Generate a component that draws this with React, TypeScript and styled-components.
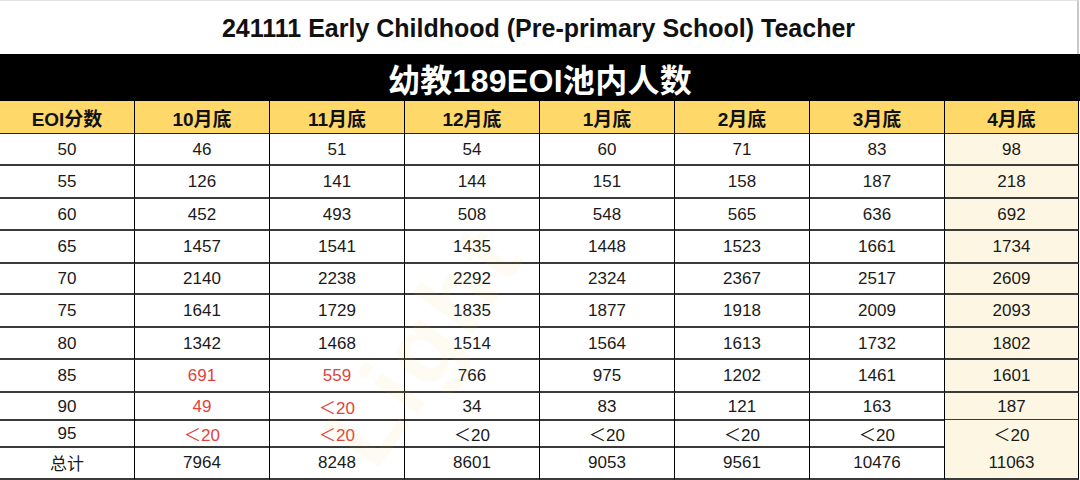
import React from "react";
import styled, { createGlobalStyle } from "styled-components";

const Global = createGlobalStyle`
  html, body { margin: 0; padding: 0; background: #ffffff; }
  body { font-family: "Liberation Sans", Arial, "Noto Sans CJK SC", sans-serif; }
`;

const Page = styled.div`
  position: relative;
  width: 1080px;
  height: 480px;
  overflow: hidden;
  background: #ffffff;
  display: flex;
  flex-direction: column;
`;

const TitleBar = styled.div`
  height: 54px;
  border-top: 1px solid #e2e2e2;
  border-right: 2px solid #c8c8c8;
  margin-right: 1px;
  display: flex;
  align-items: center;
  justify-content: center;
  font-size: 25px;
  font-weight: 700;
  color: #111;
  padding-top: 2px;
  box-sizing: border-box;
`;

const Banner = styled.div`
  height: 47px;
  background: #000;
  color: #fff;
  display: flex;
  align-items: center;
  justify-content: center;
  font-size: 32px;
  font-weight: 700;
  letter-spacing: 0.3px;
`;

const GridRow = styled.div<{ $h: number; $head?: boolean }>`
  display: grid;
  grid-template-columns: repeat(7, 135px) 134px;
  height: ${(p) => p.$h}px;
  width: 1079px;
  background: ${(p) => (p.$head ? "#fed96a" : "transparent")};
`;

const HeadCell = styled.div`
  display: flex;
  align-items: center;
  justify-content: center;
  font-size: 19px;
  font-weight: 700;
  color: #111;
  border-right: 1px solid #000;
  border-bottom: 1px solid #222;
`;

const Cell = styled.div<{ $red?: boolean; $last?: boolean }>`
  display: flex;
  align-items: center;
  justify-content: center;
  font-size: 17px;
  color: ${(p) => (p.$red ? "#e0443c" : "#1a1a1a")};
  background: ${(p) => (p.$last ? "#fdf6e2" : "transparent")};
  border-right: 1px solid #000;
  border-bottom: 2px solid #3a3a3a;
  padding-top: 1px;
`;

const Watermark = styled.div<{ $x: number; $y: number; $size: number; $deg: number }>`
  position: absolute;
  left: ${(p) => p.$x}px;
  top: ${(p) => p.$y}px;
  font-weight: 700;
  font-size: ${(p) => p.$size}px;
  color: rgba(240, 200, 90, 0.07);
  transform: rotate(${(p) => p.$deg}deg);
  transform-origin: left top;
  white-space: nowrap;
  pointer-events: none;
  letter-spacing: 4px;
`;

const headers = ["EOI分数", "10月底", "11月底", "12月底", "1月底", "2月底", "3月底", "4月底"];

type RowData = { label: string; vals: string[]; red?: number[]; h: number };

const rows: RowData[] = [
  { label: "50", vals: ["46", "51", "54", "60", "71", "83", "98"], h: 32 },
  { label: "55", vals: ["126", "141", "144", "151", "158", "187", "218"], h: 33 },
  { label: "60", vals: ["452", "493", "508", "548", "565", "636", "692"], h: 32 },
  { label: "65", vals: ["1457", "1541", "1435", "1448", "1523", "1661", "1734"], h: 33 },
  { label: "70", vals: ["2140", "2238", "2292", "2324", "2367", "2517", "2609"], h: 31 },
  { label: "75", vals: ["1641", "1729", "1835", "1877", "1918", "2009", "2093"], h: 33 },
  { label: "80", vals: ["1342", "1468", "1514", "1564", "1613", "1732", "1802"], h: 32 },
  { label: "85", vals: ["691", "559", "766", "975", "1202", "1461", "1601"], red: [0, 1], h: 33 },
  { label: "90", vals: ["49", "＜20", "34", "83", "121", "163", "187"], red: [0, 1], h: 27 },
  { label: "95", vals: ["＜20", "＜20", "＜20", "＜20", "＜20", "＜20", "＜20"], red: [0, 1], h: 26 },
  { label: "总计", vals: ["7964", "8248", "8601", "9053", "9561", "10476", "11063"], h: 34 },
];

export default function App() {
  return (
    <Page>
      <Global />
      <TitleBar>241111 Early Childhood (Pre-primary School) Teacher</TitleBar>
      <Banner>幼教189EOI池内人数</Banner>
      <GridRow $h={33} $head>
        {headers.map((h) => (
          <HeadCell key={h}>{h}</HeadCell>
        ))}
      </GridRow>
      {rows.map((r) => (
        <GridRow key={r.label} $h={r.h}>
          <Cell>{r.label}</Cell>
          {r.vals.map((v, i) => (
            <Cell key={i} $red={r.red?.includes(i)} $last={i === 6}>
              {v}
            </Cell>
          ))}
        </GridRow>
      ))}
      <Watermark $x={300} $y={420} $size={100} $deg={-55} aria-hidden>Light</Watermark>
      <Watermark $x={-20} $y={500} $size={90} $deg={-20} aria-hidden>Up</Watermark>
    </Page>
  );
}
